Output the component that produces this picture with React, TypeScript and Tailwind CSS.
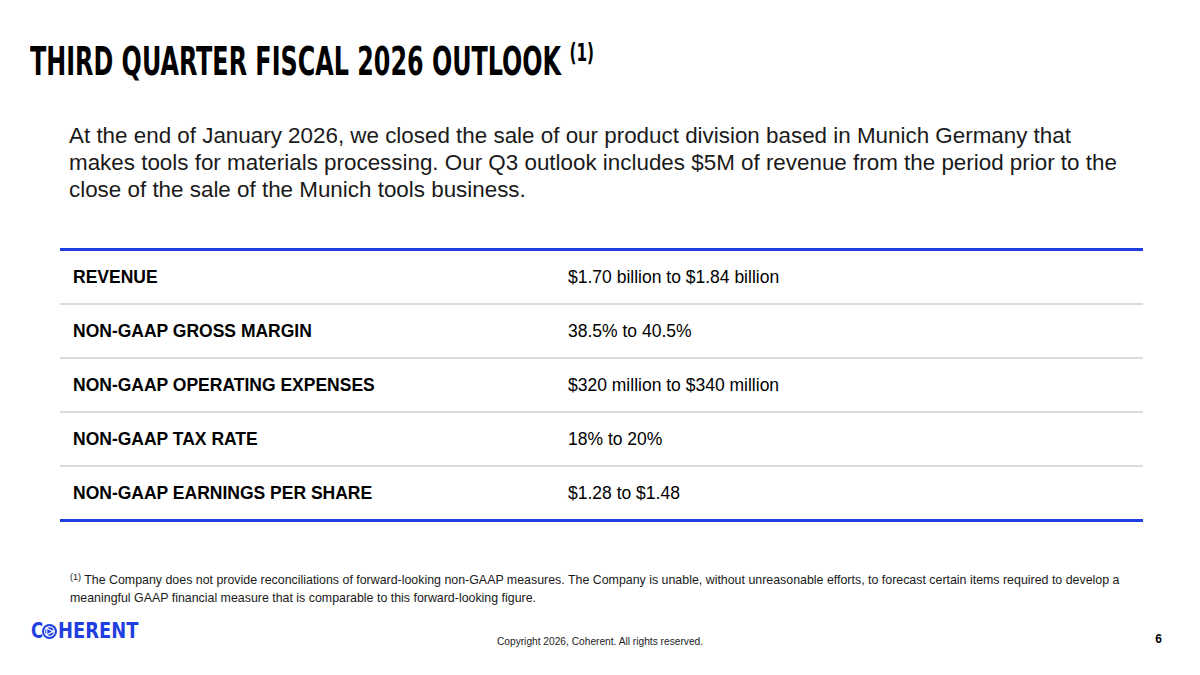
const rows = [
  { label: 'REVENUE', value: '$1.70 billion to $1.84 billion' },
  { label: 'NON-GAAP GROSS MARGIN', value: '38.5% to 40.5%' },
  { label: 'NON-GAAP OPERATING EXPENSES', value: '$320 million to $340 million' },
  { label: 'NON-GAAP TAX RATE', value: '18% to 20%' },
  { label: 'NON-GAAP EARNINGS PER SHARE', value: '$1.28 to $1.48' },
];

const condensed = { fontFamily: '"DejaVu Sans Condensed", "DejaVu Sans", sans-serif' };

function Logo() {
  return (
    <div className="flex items-center text-[#1f3fe0] text-[20.5px] font-bold leading-none" style={condensed}>
      <span className="inline-block w-[11px] origin-left scale-x-[0.9]">C</span>
      <svg width="15" height="15" viewBox="0 0 22 22" className="mr-[1px]">
        <circle cx="11" cy="11" r="11" fill="#1f3fe0" />
        <circle cx="11" cy="11" r="7.2" fill="none" stroke="#fff" strokeWidth="1.6" />
        <path d="M7 6 L16 11 L7 16 Z" fill="none" stroke="#fff" strokeWidth="1.6" strokeLinejoin="round" />
        <circle cx="7" cy="6" r="1.7" fill="#fff" />
        <circle cx="16" cy="11" r="1.7" fill="#fff" />
        <circle cx="7" cy="16" r="1.7" fill="#fff" />
      </svg>
      <span className="inline-block w-[84px] whitespace-nowrap origin-left scale-x-[0.97]">HERENT</span>
    </div>
  );
}

export default function App() {
  return (
    <div
      className="w-[1200px] h-[675px] bg-white text-black flex flex-col overflow-hidden"
      style={{ fontFamily: '"Liberation Sans", Arial, sans-serif' }}
    >
      {/* Titolo */}
      <div className="pl-[30px] pt-[40px] h-[122px]">
        <h1
          className="inline-block whitespace-nowrap origin-left scale-x-[0.68] text-[39px] font-bold leading-[44px]"
          style={condensed}
        >
          THIRD QUARTER FISCAL 2026 OUTLOOK{' '}
          <span className="text-[25px] relative -top-[14px] leading-none">(1)</span>
        </h1>
      </div>

      <p className="pl-[69px] text-[22.4px] leading-[27px] text-[#1a1a1a] whitespace-nowrap">
        At the end of January 2026, we closed the sale of our product division based in Munich Germany that
        <br />
        makes tools for materials processing. Our Q3 outlook includes $5M of revenue from the period prior to the
        <br />
        close of the sale of the Munich tools business.
      </p>

      {/* Tabella outlook */}
      <div className="ml-[60px] w-[1083px] mt-[45px] border-t-[3px] border-b-[3px] border-[#1f3fe0]">
        {rows.map((r, i) => {
          const last = i === rows.length - 1;
          return (
            <div
              key={r.label}
              className={`grid grid-cols-[495px_1fr] items-center text-[17.5px] ${
                last ? 'h-[52px]' : 'h-[54px] border-b-2 border-[#dcdcdc]'
              }`}
            >
              <div className="pl-[13px] font-bold">{r.label}</div>
              <div className="pl-[13px]">{r.value}</div>
            </div>
          );
        })}
      </div>

      {/* Nota */}
      <p className="pl-[70px] pr-[60px] mt-[50px] text-[12.4px] leading-[17px] text-[#1a1a1a]">
        <span className="text-[9px] relative -top-[4px]">(1)</span> The Company does not provide reconciliations of
        forward-looking non-GAAP measures. The Company is unable, without unreasonable efforts, to forecast certain items
        required to develop a meaningful GAAP financial measure that is comparable to this forward-looking figure.
      </p>

      {/* Footer */}
      <div className="mt-[14px] grid grid-cols-[1fr_auto_1fr] items-start">
        <div className="pl-[31px]">
          <Logo />
        </div>
        <div className="mt-[15px] text-[10.2px] leading-[12px] text-[#222]">
          Copyright 2026, Coherent. All rights reserved.
        </div>
        <div className="justify-self-end pr-[38px] mt-[11px] text-[12px] leading-[14px] font-bold">6</div>
      </div>
    </div>
  );
}
